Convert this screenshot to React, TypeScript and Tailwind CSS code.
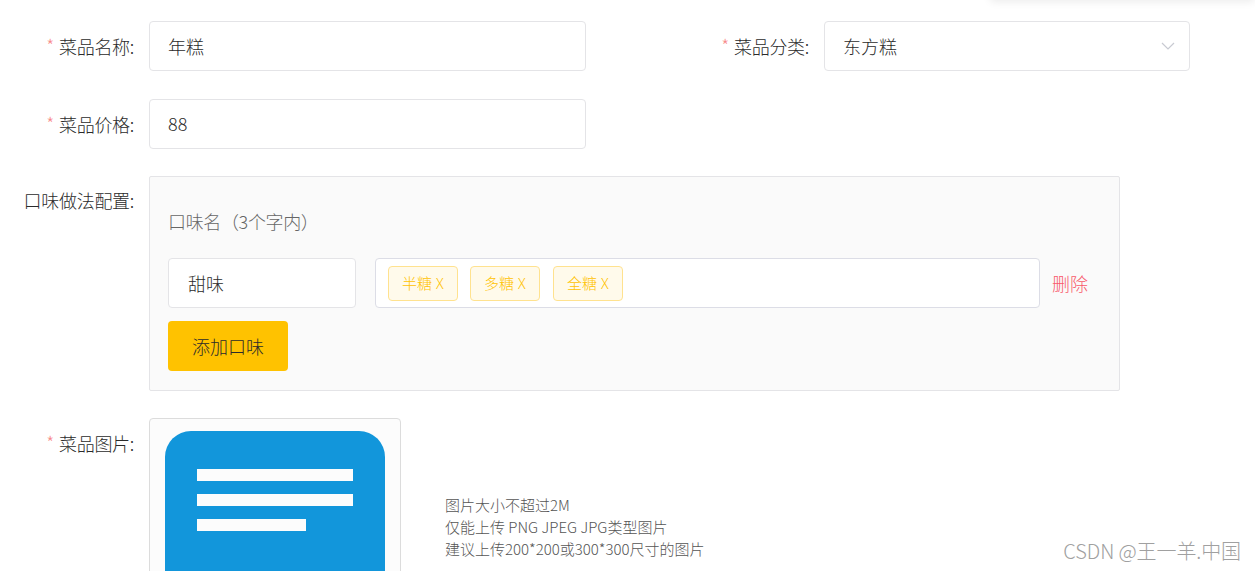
const labelClass =
  "flex h-[50px] w-[134px] shrink-0 items-center justify-end text-[18px] tracking-[-0.3px] text-[#2b2b2b] font-light";
const inputClass =
  "flex h-[50px] items-center rounded-[4px] border border-[#e4e4e7] bg-white pl-[18px] text-[18px] text-[#2b2b2b] font-light";

function FieldLabel({ text, required = true }: { text: string; required?: boolean }) {
  return (
    <div className={labelClass}>
      {required && <span className="mr-[5px] -translate-y-px text-[18px] text-[#f78989]">*</span>}
      {text}:
    </div>
  );
}

function Tag({ text, className = "" }: { text: string; className?: string }) {
  return (
    <span
      className={`flex h-[35px] w-[70px] items-center justify-center rounded-[4px] border border-[#ffe28f] bg-[#fffaeb] text-[15px] tracking-[0.2px] font-light text-[#ffc200] ${className}`}
    >
      {text}
    </span>
  );
}

export default function App() {
  return (
    <div
      className="relative h-[571px] w-[1255px] overflow-hidden bg-white pt-[21px]"
      style={{ fontFamily: '"Noto Sans CJK SC", "Liberation Sans", sans-serif' }}
    >
      {/* top edge of a floating header */}
      <div className="absolute -top-[20px] right-0 h-[20px] w-[265px] rounded-[4px] bg-white shadow-[0_2px_8px_rgba(0,0,0,0.08)]" />

      <div className="flex">
        <FieldLabel text="菜品名称" />
        <div className={`ml-[15px] w-[437px] ${inputClass}`}>年糕</div>
        <div className="ml-[89px] flex">
          <FieldLabel text="菜品分类" />
          <div className={`ml-[15px] w-[366px] justify-between pr-[14px] ${inputClass}`}>
            东方糕
            <svg width="14" height="8" viewBox="0 0 14 8" fill="none" stroke="#c8cad2" strokeWidth="1.2">
              <path d="M1 1l6 6 6-6" />
            </svg>
          </div>
        </div>
      </div>

      <div className="mt-[28px] flex">
        <FieldLabel text="菜品价格" />
        <div className={`ml-[15px] w-[437px] ${inputClass}`}>
          <span className="-translate-y-px">88</span>
        </div>
      </div>

      <div className="mt-[27px] flex">
        <div className="-mt-px">
          <FieldLabel text="口味做法配置" required={false} />
        </div>
        <div className="ml-[15px] h-[215px] w-[971px] rounded-[2px] border border-[#e4e4e7] bg-[#fafafa] pl-[18px] pt-[31px]">
          <div className="text-[18px] leading-[26px] tracking-[-0.35px] font-light text-[#666]">口味名（3个字内）</div>
          <div className="mt-[24px] flex items-center">
            <div className={`w-[188px] ${inputClass}`}>
              <span className="pl-px">甜味</span>
            </div>
            <div className="ml-[19px] flex h-[50px] w-[665px] items-center rounded-[4px] border border-[#dcdde6] bg-white pl-[12px]">
              <Tag text="半糖 X" />
              <Tag text="多糖 X" className="ml-[12px]" />
              <Tag text="全糖 X" className="ml-[13px]" />
            </div>
            <span className="ml-[12px] text-[18px] font-light text-[#f8596a]">删除</span>
          </div>
          <button className="mt-[13px] h-[50px] w-[120px] rounded-[4px] bg-[#ffc200] text-[18px] font-light text-[#2b2b2b]">
            添加口味
          </button>
        </div>
      </div>

      <div className="mt-[27px] flex">
        <FieldLabel text="菜品图片" />
        <div className="ml-[15px] h-[252px] w-[252px] shrink-0 rounded-[4px] border border-[#dcdcdc] bg-[#fcfcfc] pl-[15px] pt-[12px]">
          <svg width="220" height="220" viewBox="0 0 220 220">
            <rect width="220" height="220" rx="26" fill="#1296db" />
            <rect x="32" y="38" width="156" height="12" fill="#fcfcfc" />
            <rect x="32" y="63" width="156" height="12" fill="#fcfcfc" />
            <rect x="32" y="88" width="109" height="12" fill="#fcfcfc" />
          </svg>
        </div>
        <div className="ml-[44px] mt-[76px] text-[15px] leading-[22px] font-light text-[#555]">
          <div>图片大小不超过2M</div>
          <div>仅能上传 PNG JPEG JPG类型图片</div>
          <div>建议上传200*200或300*300尺寸的图片</div>
        </div>
      </div>

      {/* watermark */}
      <div className="absolute bottom-[7px] right-[14px] text-[20px] leading-[26px] tracking-[-0.1px] font-light text-[#a0a0a0]">
        CSDN @王一羊.中国
      </div>
    </div>
  );
}
